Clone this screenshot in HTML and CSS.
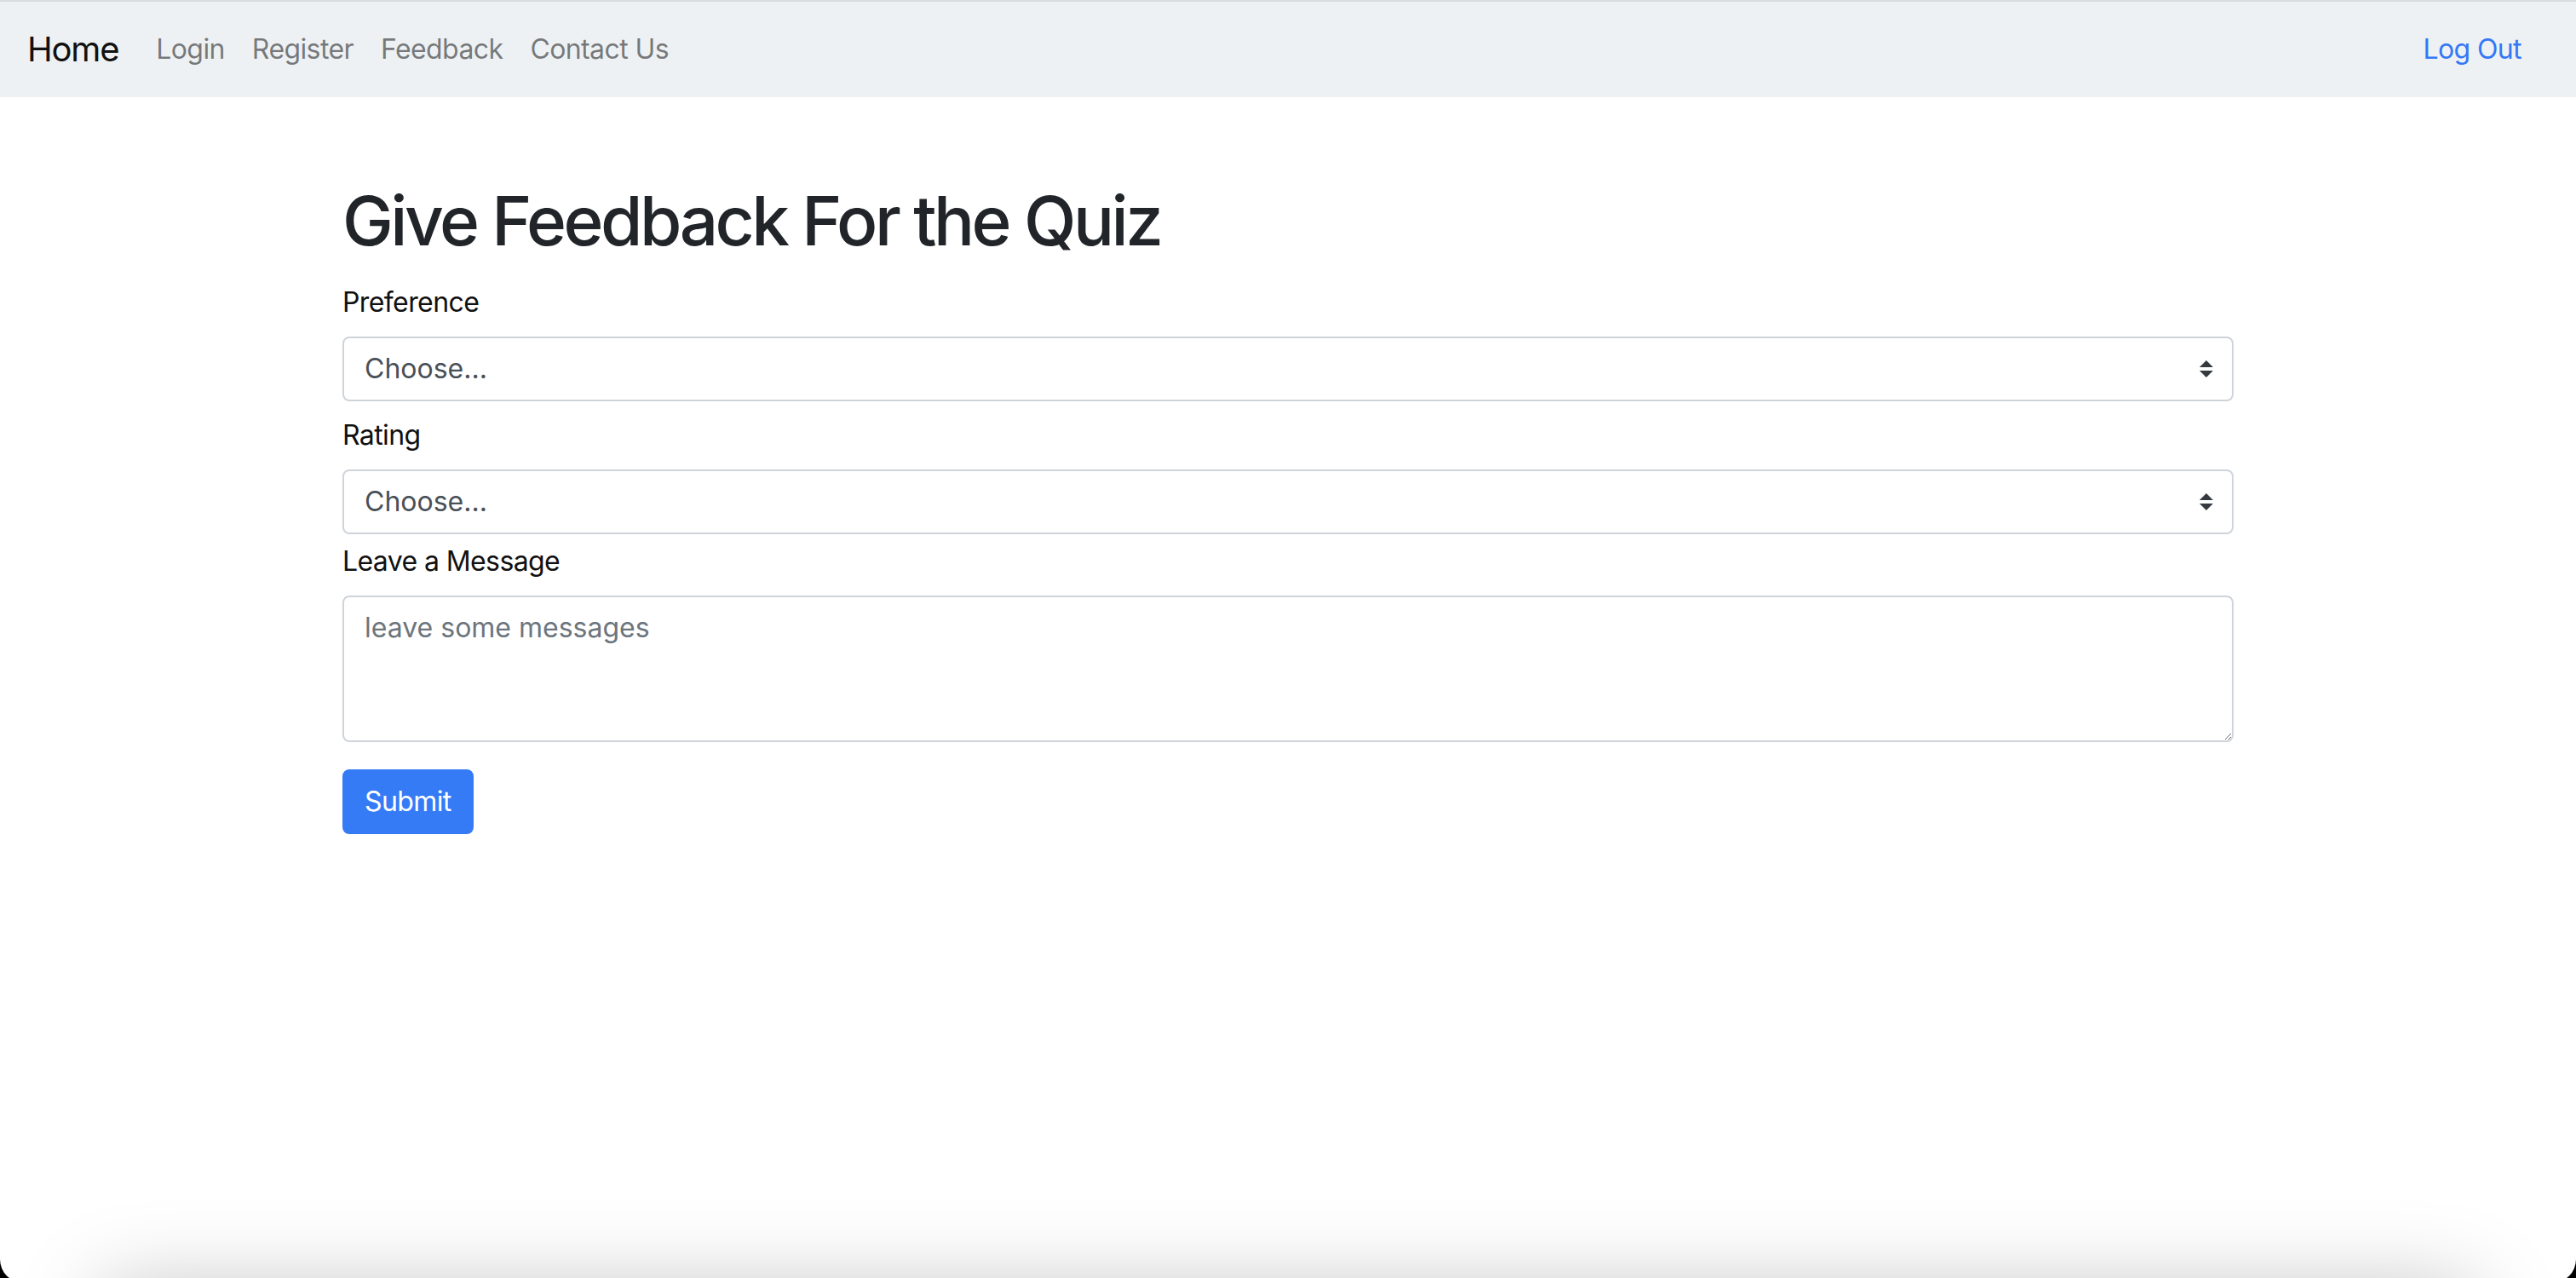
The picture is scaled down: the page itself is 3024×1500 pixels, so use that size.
FILE: index.html
```html
<!DOCTYPE html>
<html lang="en">
<head>
<meta charset="utf-8">
<title>Feedback</title>
<link rel="stylesheet" href="styles.css">
</head>
<body>
<div class="topline"></div>
<nav class="navbar">
  <a class="brand" href="#">Home</a>
  <ul class="nav">
    <li><a class="nav-link" href="#">Login</a></li>
    <li><a class="nav-link" href="#">Register</a></li>
    <li><a class="nav-link" href="#">Feedback</a></li>
    <li><a class="nav-link" href="#">Contact Us</a></li>
  </ul>
  <ul class="nav nav-right">
    <li><a class="nav-link logout" href="#">Log Out</a></li>
  </ul>
</nav>
<main class="container">
  <h1 class="title">Give Feedback For the Quiz</h1>
  <form class="form">
    <div class="group">
      <label class="label" for="pref">Preference</label>
      <div class="select-wrap">
        <select id="pref" class="select"><option>Choose...</option></select>
        <svg class="select-arrow" viewBox="0 0 4 5" width="16" height="20"><path d="M2 0L0 2h4zm0 5L0 3h4z" fill="#343a40"/></svg>
      </div>
    </div>
    <div class="group group-tight">
      <label class="label" for="rate">Rating</label>
      <div class="select-wrap">
        <select id="rate" class="select"><option>Choose...</option></select>
        <svg class="select-arrow" viewBox="0 0 4 5" width="16" height="20"><path d="M2 0L0 2h4zm0 5L0 3h4z" fill="#343a40"/></svg>
      </div>
    </div>
    <div class="group group-msg">
      <label class="label" for="msg">Leave a Message</label>
      <textarea id="msg" class="textarea" rows="3" placeholder="leave some messages"></textarea>
    </div>
    <button type="button" class="btn">Submit</button>
  </form>
</main>
<div class="bottom-shadow"></div>
<div class="window-frame"></div>
</body>
</html>
```
FILE: styles.css
```css
* { box-sizing: border-box; }
html, body { height: 100%; }
body {
  margin: 0;
  font-family: Inter, "Helvetica Neue", Arial, sans-serif;
  font-size: 32px;
  line-height: 1.5;
  letter-spacing: -0.6px;
  color: #212529;
  background: #fff;
  overflow: hidden;
}
.topline { height: 2px; background: #d9dbdd; }
.navbar {
  display: flex;
  align-items: center;
  background: #edf1f4;
  padding: 16px 48px 16px 32px;
  height: 112px;
}
.brand {
  font-size: 40px;
  line-height: 60px;
  padding: 10px 0;
  margin-right: 28px;
  color: #111;
  text-decoration: none;
  letter-spacing: -1.2px;
}
.nav { list-style: none; margin: 0; padding: 0; display: flex; }
.nav-right { margin-left: auto; }
.nav-link {
  display: block;
  padding: 16px 16px;
  color: rgba(0,0,0,0.5);
  text-decoration: none;
}
.logout { color: #3478f6; }
.container {
  width: 2280px;
  margin: 0 auto;
  padding: 97px 30px 0;
}
.title {
  font-size: 80px;
  font-weight: 500;
  line-height: 1.2;
  margin: 0 0 24px;
  letter-spacing: -3.5px;
}
.group { margin-bottom: 16px; }
.group-tight { margin-bottom: 8px; }
.group-msg { margin-bottom: 32px; }
.label { display: block; margin-bottom: 16px; color: #111; }
.select-wrap { position: relative; }
.select {
  display: block;
  width: 100%;
  height: 76px;
  padding: 12px 64px 12px 24px;
  font: inherit;
  color: #495057;
  background: #fff;
  border: 2px solid #ced4da;
  border-radius: 8px;
  appearance: none;
  -webkit-appearance: none;
}
.select-arrow { position: absolute; right: 24px; top: 28px; }
.textarea {
  display: block;
  width: 100%;
  height: 172px;
  padding: 12px 24px;
  font: inherit;
  color: #495057;
  border: 2px solid #ced4da;
  border-radius: 8px;
  resize: vertical;
}
.textarea::placeholder { color: #6c757d; }
.btn {
  font: inherit;
  color: #fff;
  background: #367bf6;
  border: 2px solid #367bf6;
  border-radius: 8px;
  padding: 12px 24px;
  line-height: 48px;
  letter-spacing: -0.6px;
}
.bottom-shadow {
  position: fixed;
  left: 120px;
  right: 120px;
  top: 1514px;
  height: 100px;
  box-shadow: 0 0 100px 0 rgba(0,0,0,0.26);
  pointer-events: none;
}
.window-frame {
  position: fixed;
  left: 0; right: 0; top: 0; bottom: -6px;
  border-radius: 0 0 28px 28px;
  box-shadow: 0 0 0 60px #000;
  pointer-events: none;
}
```
